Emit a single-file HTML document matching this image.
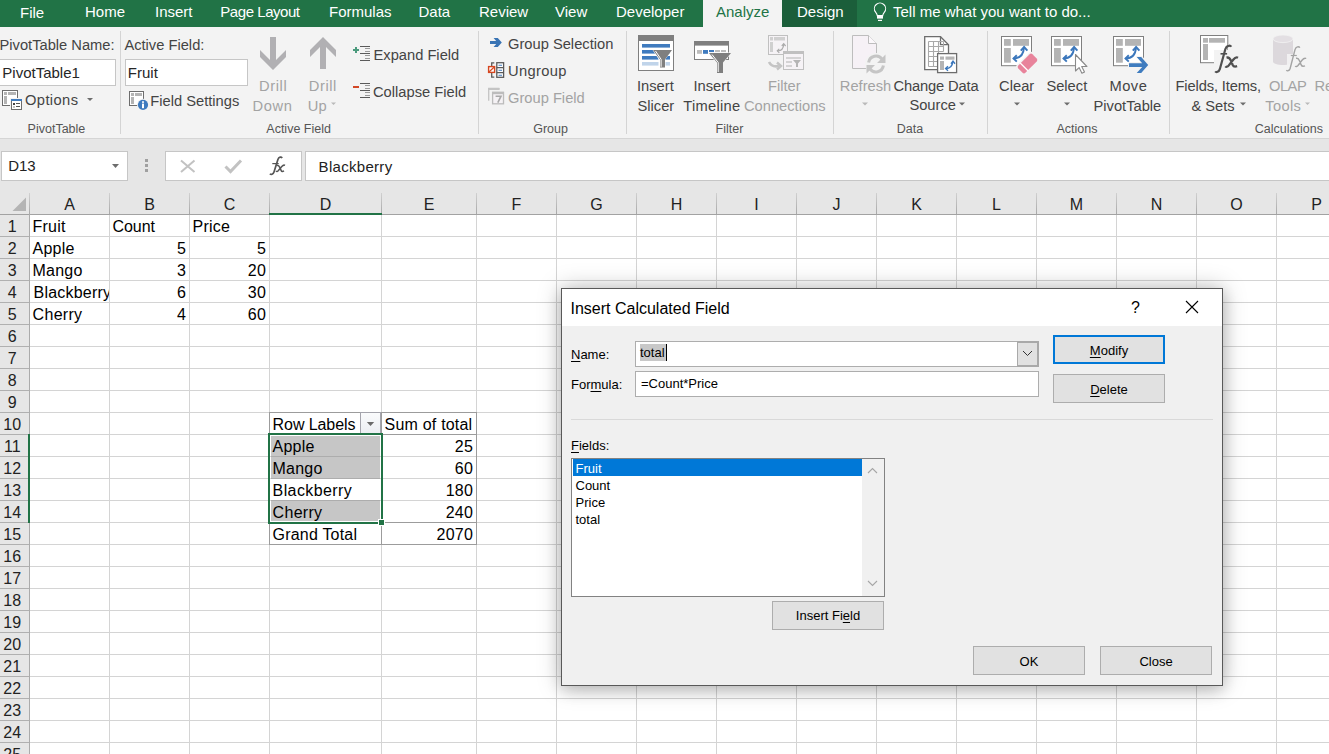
<!DOCTYPE html><html><head><meta charset='utf-8'><style>
*{margin:0;padding:0;box-sizing:border-box}
html,body{width:1329px;height:754px;overflow:hidden;background:#fff;font-family:"Liberation Sans", sans-serif;position:relative}
.a{position:absolute;white-space:pre}
.tab{position:absolute;top:0;height:27px;line-height:25px;font-size:15px;color:#fff;white-space:pre}
.rb{position:absolute;font-size:14.7px;color:#444;white-space:pre;line-height:18px}
.dis{color:#a3a3a3}
.gl{position:absolute;font-size:12.5px;color:#555;white-space:pre;line-height:14px;top:122px}
.sep{position:absolute;top:31px;height:103px;width:1px;background:#d4d4d4}
.c{position:absolute;font-size:16px;letter-spacing:0.2px;line-height:22px;height:22px;color:#000;white-space:pre}
.r{text-align:right}
.dt{position:absolute;font-size:13px;color:#000;white-space:pre;line-height:16px}
.btn{position:absolute;background:#e1e1e1;border:1px solid #adadad;font-size:13px;text-align:center;color:#000;white-space:pre}
.u{text-decoration:underline;text-underline-offset:2px}
svg{position:absolute;overflow:visible}
</style></head><body><div class='a' style='left:0;top:0;width:1329px;height:27px;background:#217346'></div><div class='a' style='left:703px;top:0;width:79px;height:27px;background:#f3f3f3'></div><div class='a' style='left:782px;top:0;width:75px;height:27px;background:#1b5e3a'></div><div class='tab' style='left:20px'>File</div><div class='tab' style='left:85px;top:-1px'>Home</div><div class='tab' style='left:155px;top:-1px'>Insert</div><div class='tab' style='left:220.3px;letter-spacing:-0.45px;top:-1px'>Page Layout</div><div class='tab' style='left:329px;top:-1px'>Formulas</div><div class='tab' style='left:418.5px;top:-1px'>Data</div><div class='tab' style='left:479px;top:-1px'>Review</div><div class='tab' style='left:555px;top:-1px'>View</div><div class='tab' style='left:616px;top:-1px'>Developer</div><div class='tab' style='left:797px;top:-1px'>Design</div><div class='tab' style='left:716px;top:-1px;color:#217346'>Analyze</div><div class='tab' style='left:893px;top:-1px'>Tell me what you want to do...</div><div class='a' style='left:0;top:27px;width:1329px;height:111px;background:#f3f3f3'></div><div class='a' style='left:0;top:138px;width:1329px;height:1px;background:#d5d5d5'></div><div class='a' style='left:0;top:139px;width:1329px;height:76px;background:#e6e6e6'></div><div class='sep' style='left:120px'></div><div class='sep' style='left:478px'></div><div class='sep' style='left:626px'></div><div class='sep' style='left:833px'></div><div class='sep' style='left:987px'></div><div class='sep' style='left:1169px'></div><div class='rb' style='left:-0.5px;top:35.7px'>PivotTable Name:</div><div class='rb' style='left:124.4px;top:35.7px'>Active Field:</div><div class='a' style='left:0;top:59px;width:116px;height:27px;background:#fff;border:1px solid #c6c6c6;border-left:none'></div><div class='a' style='left:125px;top:59px;width:123px;height:27px;background:#fff;border:1px solid #c6c6c6'></div><div class='rb' style='left:2.3px;top:63.8px;font-size:15px;color:#262626'>PivotTable1</div><div class='rb' style='left:127.8px;top:63.8px;font-size:15px;color:#262626'>Fruit</div><div class='rb' style='left:25px;top:91.4px;letter-spacing:0.4px'>Options</div><div class='rb' style='left:150.3px;top:91.5px'>Field Settings</div><div class='rb dis' style='left:259px;top:76.8px;letter-spacing:0.6px'>Drill</div><div class='rb dis' style='left:252.5px;top:96.7px;letter-spacing:0.6px'>Down</div><div class='rb dis' style='left:308.7px;top:76.8px;letter-spacing:0.6px'>Drill</div><div class='rb dis' style='left:307.8px;top:96.7px'>Up</div><div class='rb' style='left:373.5px;top:45.9px'>Expand Field</div><div class='rb' style='left:373px;top:83px'>Collapse Field</div><div class='rb' style='left:508px;top:35px'>Group Selection</div><div class='rb' style='left:508px;top:62.3px;letter-spacing:0.35px'>Ungroup</div><div class='rb dis' style='left:508px;top:88.9px'>Group Field</div><div class='rb' style='left:637px;top:76.7px'>Insert</div><div class='rb' style='left:637.5px;top:96.8px'>Slicer</div><div class='rb' style='left:693.5px;top:76.7px'>Insert</div><div class='rb' style='left:683.3px;top:96.8px;letter-spacing:0.28px'>Timeline</div><div class='rb dis' style='left:768px;top:76.7px'>Filter</div><div class='rb dis' style='left:744px;top:96.8px'>Connections</div><div class='rb dis' style='left:839.8px;top:76.6px'>Refresh</div><div class='rb' style='left:893.5px;top:76.6px;letter-spacing:-0.15px'>Change Data</div><div class='rb' style='left:909.4px;top:96.2px'>Source</div><div class='rb' style='left:999.1px;top:76.6px'>Clear</div><div class='rb' style='left:1046.4px;top:76.6px'>Select</div><div class='rb' style='left:1109.4px;top:76.6px;letter-spacing:0.5px'>Move</div><div class='rb' style='left:1093.5px;top:96.9px'>PivotTable</div><div class='rb' style='left:1175.5px;top:76.6px;letter-spacing:-0.13px'>Fields, Items,</div><div class='rb' style='left:1191.4px;top:96.9px'>&amp; Sets</div><div class='rb dis' style='left:1269px;top:76.6px;letter-spacing:-0.5px'>OLAP</div><div class='rb dis' style='left:1265.3px;top:96.9px;letter-spacing:0.3px'>Tools</div><div class='rb dis' style='left:1314.5px;top:76.6px'>Re</div><div class='gl' style='left:27.6px'>PivotTable</div><div class='gl' style='left:266.3px'>Active Field</div><div class='gl' style='left:533.2px'>Group</div><div class='gl' style='left:715.6px'>Filter</div><div class='gl' style='left:896.7px'>Data</div><div class='gl' style='left:1056.4px'>Actions</div><div class='gl' style='left:1254.8px'>Calculations</div><svg style='left:0;top:0' width='1329' height='140' viewBox='0 0 1329 140'>
<!-- tab lightbulb -->
<path d='M877.3 15.6c-.2-1.6-.9-2.5-1.7-3.5a5.6 5.6 0 1 1 8.8 0c-.8 1-1.5 1.9-1.7 3.5z' fill='none' stroke='#fff' stroke-width='1.1'/>
<rect x='877' y='15.8' width='6' height='2.8' fill='#fff'/><rect x='878' y='19.8' width='4' height='1.2' fill='#fff'/>
<!-- small dropdown arrows -->
<g fill='#6d6d6d'>
<path d='M87 98h6l-3 3z'/><path d='M1014 102.5h6l-3 3z'/><path d='M1064 102.5h6l-3 3z'/>
<path d='M959 102.5h6l-3 3z'/><path d='M1240 102.5h6l-3 3z'/>
</g>
<g fill='#b9b9b9'><path d='M331 102.5h5l-2.5 2.5z'/><path d='M862 102.5h6l-3 3z'/><path d='M1305 102.5h5l-2.5 2.5z'/></g>
<!-- Options icon -->
<rect x='2.5' y='90.5' width='15' height='15' fill='#fff' stroke='#6d6d6d'/>
<rect x='4' y='92' width='3' height='3' fill='#b4b4b4'/><rect x='8' y='92' width='8' height='3' fill='#b4b4b4'/><rect x='4' y='96' width='3' height='8' fill='#b4b4b4'/>
<rect x='10' y='98' width='13' height='13' fill='#f3f3f3'/>
<rect x='11.5' y='99.5' width='10' height='10' fill='#fff' stroke='#6d6d6d'/><rect x='11' y='99' width='11' height='2' fill='#3f7bbf'/>
<rect x='13' y='103' width='2' height='2' fill='#444'/><rect x='16' y='103' width='4' height='1' fill='#555'/><rect x='13' y='106' width='2' height='2' fill='#c4c4c4'/><rect x='16' y='106' width='4' height='1' fill='#555'/>
<!-- Field settings icon -->
<rect x='129.5' y='91.5' width='14' height='14' fill='#fff' stroke='#6d6d6d'/>
<rect x='131' y='93' width='3' height='3' fill='#b4b4b4'/><rect x='135' y='93' width='7' height='3' fill='#b4b4b4'/><rect x='131' y='97' width='3' height='7' fill='#b4b4b4'/>
<circle cx='143' cy='104.8' r='6' fill='#f3f3f3'/><circle cx='143' cy='104.8' r='5.1' fill='#3f7bbf'/>
<rect x='142' y='101.3' width='2' height='1.5' fill='#fff'/><rect x='142' y='103.6' width='2' height='4.6' fill='#fff'/>
<!-- Drill arrows -->
<path d='M270 37h6v23l10-10v7l-13 13-13-13v-7l10 10z' fill='#b1b0b3'/>
<path d='M323 37l13 13v7l-10-10v22h-6v-22l-10 10v-7z' fill='#b1b0b3'/>
<!-- Expand / collapse -->
<path d='M353 50h6M356 47v6' stroke='#4a9a7c' stroke-width='2'/>
<path d='M353 87h6' stroke='#d24726' stroke-width='2'/>
<g stroke='#5a5a5a' stroke-width='1'>
<path d='M360 46.5h10M360 53.5h10M360 60.5h10'/>
<path d='M360 83.5h10M360 90.5h10M360 97.5h10'/>
</g>
<g stroke='#9a9a9a' stroke-width='1'>
<path d='M365 48.5h5M365 51.5h5M365 55.5h5M365 58.5h5'/>
<path d='M365 85.5h5M365 88.5h5M365 92.5h5M365 95.5h5'/>
</g>
<!-- Group selection arrow -->
<path d='M490 41h6.2l-2.6-3.1h4.2l4 4.6-4 4.6h-4.2l2.6-3.1h-6.2z' fill='#3a74b4'/>
<!-- Ungroup -->
<path d='M494.3 62.8h-2.6v14.4h2.6' fill='none' stroke='#5a5a5a' stroke-width='1.3'/>
<rect x='488.6' y='66.6' width='6' height='5.8' fill='#fff' stroke='#d5461f' stroke-width='1.4'/>
<path d='M489.2 71.8l4.8-4.6' stroke='#d5461f' stroke-width='1.2'/>
<rect x='496.8' y='62.7' width='6.8' height='14.6' fill='#fff' stroke='#5a5a5a' stroke-width='1.3'/>
<path d='M496.8 67.7h6.8M496.8 72.6h6.8' stroke='#5a5a5a' stroke-width='1.2'/>
<path d='M498.5 65.3h3.5M498.5 70.3h3.5M498.5 75.2h3.5' stroke='#3f7bbf' stroke-width='1.1'/>
<!-- Group field (disabled) -->
<path d='M488.7 100.7v-12.2h10.6' fill='none' stroke='#c4c4c4' stroke-width='1.3'/>
<path d='M488.2 89h11.4' stroke='#c4c4c4' stroke-width='2'/>
<rect x='492.6' y='92.4' width='10.9' height='11.4' fill='#f5f2f5' stroke='#bcbcbc' stroke-width='1.3'/>
<rect x='492' y='91.8' width='12' height='2.4' fill='#bcbcbc'/>
<path d='M495.6 96.2h5.4l-3.2 6.4' fill='none' stroke='#a8a8a8' stroke-width='1.6'/>
<!-- Insert slicer -->
<rect x='638.5' y='35.5' width='35' height='35' fill='#fff' stroke='#7f7f7f'/>
<rect x='638' y='35' width='36' height='6' fill='#7f7f7f'/>
<rect x='642' y='44' width='28' height='3.6' fill='#3f7bbf'/>
<rect x='642' y='50' width='28' height='3.6' fill='#3f7bbf'/>
<rect x='642' y='56' width='28' height='3.6' fill='#3f7bbf'/>
<rect x='642' y='62' width='28' height='3.6' fill='#c0d4ea'/>
<path d='M652 49h21l-7.5 10v9h-7v-9z' fill='#fff'/>
<path d='M653 50h19l-7 9.5v8h-5v-8z' fill='#7f7f7f'/>
<path d='M655.5 51l5.6 8.3v7.5' fill='none' stroke='#fff' stroke-width='1'/>
<!-- Insert timeline -->
<rect x='694.5' y='41.5' width='34' height='18' fill='#fff' stroke='#7f7f7f'/>
<rect x='694' y='41' width='35' height='4.6' fill='#7f7f7f'/>
<rect x='697' y='50' width='5' height='3.8' fill='#bdbdbd'/><rect x='703' y='50' width='5' height='3.8' fill='#3f7bbf'/>
<rect x='709' y='50' width='5' height='2' fill='#3f7bbf'/><rect x='715' y='50' width='5' height='2' fill='#bdbdbd'/><rect x='721' y='50' width='5' height='2' fill='#bdbdbd'/>
<path d='M708 52.5h24l-8.5 10v11h-7.5v-11z' fill='#f3f3f3'/>
<path d='M709 53h22l-8 9.5v10.5h-6v-10.5z' fill='#7f7f7f'/>
<path d='M712 54.5l6.2 8v9.5' fill='none' stroke='#fff' stroke-width='1'/>
<!-- Filter connections (disabled) -->
<rect x='768.5' y='35.5' width='19' height='19' fill='#f6f3f6' stroke='#c0c0c0'/>
<rect x='770' y='37' width='3' height='3.5' fill='#d0d0d0'/><rect x='774' y='37' width='11' height='3.5' fill='#d0d0d0'/><rect x='770' y='42' width='3' height='10' fill='#d0d0d0'/>
<path d='M777.5 50.8c3.5 0 6-1.8 6.2-6.6' fill='none' stroke='#ababab' stroke-width='1.2'/><path d='M781.8 46l1.9-2.3 1.9 2.3M779.3 48.8l-2 2 2 2' fill='none' stroke='#ababab' stroke-width='1.2'/>
<rect x='783.5' y='51.5' width='20' height='18' fill='#f6f3f6' stroke='#c0c0c0'/>
<rect x='783' y='51' width='21' height='3' fill='#c0c0c0'/>
<path d='M786 58h15M786 62h6M786 66h6' stroke='#c9c9c9' stroke-width='1.5'/>
<path d='M793 60h8l-3 3.5v3.5h-2v-3.5z' fill='#b5b5b5'/>
<path d='M769 62c2 4 6 5 10 4' fill='none' stroke='#c4c4c4' stroke-width='2.6'/>
<path d='M777 62.5l4 3.5-4 3.5' fill='none' stroke='#c4c4c4' stroke-width='2.4'/>
<!-- Refresh (disabled) -->
<path d='M852.5 35.5h16l8 8v25h-24z' fill='#f6f1f6' stroke='#bdbdbd'/>
<path d='M868.5 35.5v8h8' fill='#fbf8fb' stroke='#bdbdbd'/>
<circle cx='876' cy='64' r='11' fill='#f3f3f3'/>
<path d='M868.6 62.5a7.5 7.5 0 0 1 13.6-3.2M883.4 65.5a7.5 7.5 0 0 1-13.6 3.2' fill='none' stroke='#c5c5c5' stroke-width='3'/>
<path d='M885.5 54.5v8.5h-8.5z M866.5 73.5v-8.5h8.5z' fill='#c5c5c5'/>
<!-- Change data source -->
<path d='M924.7 36.7h15.8l8 8v25h-23.8z' fill='#fff' stroke='#6d6d6d' stroke-width='1.3'/>
<path d='M940.5 36.7v8h8' fill='none' stroke='#6d6d6d' stroke-width='1.3'/>
<g stroke='#a9a9a9' fill='none' stroke-width='1.1'><path d='M928.5 41.5h15M928.5 46.5h15M928.5 51.5h15M928.5 56.5h9M928.5 61.5h9M928.5 66.5h9M928.5 41.5v25M933.5 41.5v25M938.5 41.5v12M943.5 41.5v10'/></g>
<rect x='937.6' y='53.6' width='19' height='19' fill='#fff' stroke='#6d6d6d' stroke-width='1.3'/>
<rect x='940' y='56.5' width='4' height='3.2' fill='#b4b4b4'/><rect x='945.5' y='56.5' width='9' height='3.2' fill='#b4b4b4'/><rect x='940' y='61' width='4' height='9' fill='#b4b4b4'/>
<path d='M945.8 68.5c4 0 6.6-2.4 7-6.8' fill='none' stroke='#3b77bc' stroke-width='1.4'/>
<path d='M951 63.8l2-2.6 2 2.6M948 66.3l-2.4 2.2 2.4 2.2' fill='none' stroke='#3b77bc' stroke-width='1.4'/>
<rect x='1001.5' y='36.5' width='30' height='29.2' fill='#fff' stroke='#7f7f7f'/>
<rect x='1004' y='39' width='6.8' height='6.8' fill='#b4b4b4'/><rect x='1013' y='39' width='16' height='6.8' fill='#b4b4b4'/><rect x='1004' y='48' width='6.8' height='14.7' fill='#b4b4b4'/>
<path d='M1013.5 58.4c6 0 10-2.5 10.5-11' fill='none' stroke='#3b77bc' stroke-width='1.9'/>
<path d='M1020.8 50.6l3.3-3.6 3.3 3.6M1016.8 55.2l-3.3 3.2 3.3 3.2' fill='none' stroke='#3b77bc' stroke-width='1.9'/>
<g transform='rotate(-45 1027.5 63.5)'><rect x='1016' y='57' width='23' height='13' rx='3' fill='#f3f3f3'/><rect x='1017.5' y='58.5' width='20' height='10' rx='2' fill='#e8839b'/><rect x='1022' y='58' width='1.3' height='11' fill='#fff'/></g>
<rect x='1051.5' y='36.5' width='30' height='29.2' fill='#fff' stroke='#7f7f7f'/>
<rect x='1054' y='39' width='6.8' height='6.8' fill='#b4b4b4'/><rect x='1063' y='39' width='16' height='6.8' fill='#b4b4b4'/><rect x='1054' y='48' width='6.8' height='14.7' fill='#b4b4b4'/>
<path d='M1063.5 58.4c6 0 10-2.5 10.5-11' fill='none' stroke='#3b77bc' stroke-width='1.9'/>
<path d='M1070.8 50.6l3.3-3.6 3.3 3.6M1066.8 55.2l-3.3 3.2 3.3 3.2' fill='none' stroke='#3b77bc' stroke-width='1.9'/>
<path d='M1075.5 54.5v16.5l3.6-3.4 2.8 5.6 2.6-1.3-2.8-5.4h5.2z' fill='#fff' stroke='#8a8a8a' stroke-width='1.1' stroke-linejoin='round'/>
<rect x='1113.5' y='36.5' width='30' height='29.2' fill='#fff' stroke='#7f7f7f'/>
<rect x='1116' y='39' width='6.8' height='6.8' fill='#b4b4b4'/><rect x='1125' y='39' width='16' height='6.8' fill='#b4b4b4'/><rect x='1116' y='48' width='6.8' height='14.7' fill='#b4b4b4'/>
<path d='M1125.5 58.4c6 0 10-2.5 10.5-11' fill='none' stroke='#3b77bc' stroke-width='1.9'/>
<path d='M1132.8 50.6l3.3-3.6 3.3 3.6M1128.8 55.2l-3.3 3.2 3.3 3.2' fill='none' stroke='#3b77bc' stroke-width='1.9'/>
<path d='M1128 62h13l-5.5-6h6.5l8 9-8 9h-6.5l5.5-6h-13z' fill='#f3f3f3'/><path d='M1129 63.2h13.2l-5.5-6.1h4.5l7 7.9-7 7.9h-4.5l5.5-6h-13.2z' fill='#3f7cbf'/>
<!-- Fields items sets -->
<rect x='1200.5' y='35.5' width='27.3' height='27.2' fill='#fff' stroke='#7f7f7f'/>
<rect x='1203' y='38' width='5' height='4.7' fill='#b4b4b4'/><rect x='1209' y='38' width='16' height='4.7' fill='#b4b4b4'/><rect x='1203' y='44' width='5' height='16' fill='#b4b4b4'/>
<rect x='1214' y='50' width='26' height='24' fill='#f3f3f3'/>
<rect x='1228' y='44' width='5' height='8' fill='#f3f3f3'/>
<path d='M1231.2 46.8c-.8-1.6-4.6-1.8-5.8 2.2l-5.6 20.2c-.9 2.9-3.6 3.4-4.6 2.2' fill='none' stroke='#505050' stroke-width='2.2'/>
<path d='M1220.5 53.8h6.6' stroke='#505050' stroke-width='1.6'/>
<path d='M1226.5 57.6c2.4-.6 3.4.6 4.4 3l1.8 4.4c.7 1.6 2 2 4.4 1.2M1238 57.8c-1.6-.9-3.2 0-4.8 2l-4.6 5.8c-1 1.3-2.6 1.5-3.2.7' fill='none' stroke='#505050' stroke-width='2.3'/>
<!-- OLAP -->
<path d='M1273 39v22.5c0 2.2 4.5 3.5 10 3.5s10-1.3 10-3.5v-22.5z' fill='#dcd8dc'/>
<ellipse cx='1283' cy='38.8' rx='10' ry='3.8' fill='#e3dfe3' stroke='#f3f3f3' stroke-width='0.8'/>
<rect x='1287' y='54' width='21' height='20' fill='#f3f3f3' opacity='0.9'/>
<path d='M1299.8 47.8c-.7-1.4-3.8-1.6-4.8 1.8l-4.8 18.6c-.8 2.8-3 3.2-3.8 2' fill='none' stroke='#a3a3a3' stroke-width='1.4'/>
<path d='M1290.8 55.5h6' stroke='#a3a3a3' stroke-width='1.2'/>
<path d='M1296 58.3c2-.5 2.8.5 3.6 2.6l1.6 4c.6 1.4 1.8 1.8 3.8 1M1306.2 58.5c-1.4-.8-2.8 0-4.2 1.8l-4 5.2c-.9 1.1-2.2 1.3-2.8.6' fill='none' stroke='#a3a3a3' stroke-width='1.4'/>
</svg>
<div class='a' style='left:1px;top:151px;width:127px;height:30px;background:#fff;border:1px solid #c6c6c6'></div><div class='a' style='left:8.2px;top:157px;font-size:15px;line-height:18px;color:#222'>D13</div><div class='a' style='left:165px;top:151px;width:137px;height:30px;background:#fff;border:1px solid #c6c6c6'></div><div class='a' style='left:305px;top:151px;width:1030px;height:30px;background:#fff;border:1px solid #c6c6c6'></div><div class='a' style='left:318.6px;top:158px;font-size:15px;letter-spacing:0.3px;line-height:18px;color:#222'>Blackberry</div><svg style='left:0;top:0' width='1329' height='200'>
<path d='M112 164h7l-3.5 4z' fill='#6d6d6d'/>
<rect x='145' y='159' width='3' height='3' fill='#a0a0a0'/><rect x='145' y='164' width='3' height='3' fill='#a0a0a0'/><rect x='145' y='169' width='3' height='3' fill='#a0a0a0'/>
<path d='M181 160.5l13.5 11.5M194.5 160.5l-13.5 11.5' stroke='#c2c2c2' stroke-width='2'/>
<path d='M225.5 166.5l5 5 10.5-11' fill='none' stroke='#c2c2c2' stroke-width='3'/>
<path d='M282.2 158c-.8-1.2-3.4-1.5-4.3 1.5l-3.9 12.6c-.8 2.5-3 2.8-4.1 1.6' fill='none' stroke='#555' stroke-width='1.7'/>
<path d='M272.3 163.6h6.4' stroke='#555' stroke-width='1.2'/>
<path d='M276.6 165.4c1.9-.4 2.5.4 3.3 2.2l1.3 3c.5 1.1 1.4 1.2 2.8.3M285 165.4c-1-.6-2.2 0-3.2 1.2l-3.4 4c-.8 1-1.8 1-2.4.3' fill='none' stroke='#555' stroke-width='1.5'/>
</svg><div class='a' style='left:30px;top:215px;width:1299px;height:539px;background:#fff'></div><div class='a' style='left:0;top:215px;width:29px;height:539px;background:#e6e6e6'></div><div class='a' style='left:30px;top:236px;width:1299px;height:1px;background:#d4d4d4'></div><div class='a' style='left:0;top:236px;width:29px;height:1px;background:#b0b0b0'></div><div class='a' style='left:30px;top:258px;width:1299px;height:1px;background:#d4d4d4'></div><div class='a' style='left:0;top:258px;width:29px;height:1px;background:#b0b0b0'></div><div class='a' style='left:30px;top:280px;width:1299px;height:1px;background:#d4d4d4'></div><div class='a' style='left:0;top:280px;width:29px;height:1px;background:#b0b0b0'></div><div class='a' style='left:30px;top:302px;width:1299px;height:1px;background:#d4d4d4'></div><div class='a' style='left:0;top:302px;width:29px;height:1px;background:#b0b0b0'></div><div class='a' style='left:30px;top:324px;width:1299px;height:1px;background:#d4d4d4'></div><div class='a' style='left:0;top:324px;width:29px;height:1px;background:#b0b0b0'></div><div class='a' style='left:30px;top:346px;width:1299px;height:1px;background:#d4d4d4'></div><div class='a' style='left:0;top:346px;width:29px;height:1px;background:#b0b0b0'></div><div class='a' style='left:30px;top:368px;width:1299px;height:1px;background:#d4d4d4'></div><div class='a' style='left:0;top:368px;width:29px;height:1px;background:#b0b0b0'></div><div class='a' style='left:30px;top:390px;width:1299px;height:1px;background:#d4d4d4'></div><div class='a' style='left:0;top:390px;width:29px;height:1px;background:#b0b0b0'></div><div class='a' style='left:30px;top:412px;width:1299px;height:1px;background:#d4d4d4'></div><div class='a' style='left:0;top:412px;width:29px;height:1px;background:#b0b0b0'></div><div class='a' style='left:30px;top:434px;width:1299px;height:1px;background:#d4d4d4'></div><div class='a' style='left:0;top:434px;width:29px;height:1px;background:#b0b0b0'></div><div class='a' style='left:30px;top:456px;width:1299px;height:1px;background:#d4d4d4'></div><div class='a' style='left:0;top:456px;width:29px;height:1px;background:#b0b0b0'></div><div class='a' style='left:30px;top:478px;width:1299px;height:1px;background:#d4d4d4'></div><div class='a' style='left:0;top:478px;width:29px;height:1px;background:#b0b0b0'></div><div class='a' style='left:30px;top:500px;width:1299px;height:1px;background:#d4d4d4'></div><div class='a' style='left:0;top:500px;width:29px;height:1px;background:#b0b0b0'></div><div class='a' style='left:30px;top:522px;width:1299px;height:1px;background:#d4d4d4'></div><div class='a' style='left:0;top:522px;width:29px;height:1px;background:#b0b0b0'></div><div class='a' style='left:30px;top:544px;width:1299px;height:1px;background:#d4d4d4'></div><div class='a' style='left:0;top:544px;width:29px;height:1px;background:#b0b0b0'></div><div class='a' style='left:30px;top:566px;width:1299px;height:1px;background:#d4d4d4'></div><div class='a' style='left:0;top:566px;width:29px;height:1px;background:#b0b0b0'></div><div class='a' style='left:30px;top:588px;width:1299px;height:1px;background:#d4d4d4'></div><div class='a' style='left:0;top:588px;width:29px;height:1px;background:#b0b0b0'></div><div class='a' style='left:30px;top:610px;width:1299px;height:1px;background:#d4d4d4'></div><div class='a' style='left:0;top:610px;width:29px;height:1px;background:#b0b0b0'></div><div class='a' style='left:30px;top:632px;width:1299px;height:1px;background:#d4d4d4'></div><div class='a' style='left:0;top:632px;width:29px;height:1px;background:#b0b0b0'></div><div class='a' style='left:30px;top:654px;width:1299px;height:1px;background:#d4d4d4'></div><div class='a' style='left:0;top:654px;width:29px;height:1px;background:#b0b0b0'></div><div class='a' style='left:30px;top:676px;width:1299px;height:1px;background:#d4d4d4'></div><div class='a' style='left:0;top:676px;width:29px;height:1px;background:#b0b0b0'></div><div class='a' style='left:30px;top:698px;width:1299px;height:1px;background:#d4d4d4'></div><div class='a' style='left:0;top:698px;width:29px;height:1px;background:#b0b0b0'></div><div class='a' style='left:30px;top:720px;width:1299px;height:1px;background:#d4d4d4'></div><div class='a' style='left:0;top:720px;width:29px;height:1px;background:#b0b0b0'></div><div class='a' style='left:30px;top:742px;width:1299px;height:1px;background:#d4d4d4'></div><div class='a' style='left:0;top:742px;width:29px;height:1px;background:#b0b0b0'></div><div class='a' style='left:30px;top:764px;width:1299px;height:1px;background:#d4d4d4'></div><div class='a' style='left:0;top:764px;width:29px;height:1px;background:#b0b0b0'></div><div class='a' style='left:109px;top:215px;width:1px;height:539px;background:#d4d4d4'></div><div class='a' style='left:189px;top:215px;width:1px;height:539px;background:#d4d4d4'></div><div class='a' style='left:269px;top:215px;width:1px;height:539px;background:#d4d4d4'></div><div class='a' style='left:381px;top:215px;width:1px;height:539px;background:#d4d4d4'></div><div class='a' style='left:476px;top:215px;width:1px;height:539px;background:#d4d4d4'></div><div class='a' style='left:556px;top:215px;width:1px;height:539px;background:#d4d4d4'></div><div class='a' style='left:636px;top:215px;width:1px;height:539px;background:#d4d4d4'></div><div class='a' style='left:716px;top:215px;width:1px;height:539px;background:#d4d4d4'></div><div class='a' style='left:796px;top:215px;width:1px;height:539px;background:#d4d4d4'></div><div class='a' style='left:876px;top:215px;width:1px;height:539px;background:#d4d4d4'></div><div class='a' style='left:956px;top:215px;width:1px;height:539px;background:#d4d4d4'></div><div class='a' style='left:1036px;top:215px;width:1px;height:539px;background:#d4d4d4'></div><div class='a' style='left:1116px;top:215px;width:1px;height:539px;background:#d4d4d4'></div><div class='a' style='left:1196px;top:215px;width:1px;height:539px;background:#d4d4d4'></div><div class='a' style='left:1276px;top:215px;width:1px;height:539px;background:#d4d4d4'></div><div class='a' style='left:1356px;top:215px;width:1px;height:539px;background:#d4d4d4'></div><div class='a' style='left:29px;top:193px;width:1px;height:21px;background:linear-gradient(#d0d0d0,#a8a8a8)'></div><div class='a' style='left:109px;top:193px;width:1px;height:21px;background:linear-gradient(#d0d0d0,#a8a8a8)'></div><div class='a' style='left:189px;top:193px;width:1px;height:21px;background:linear-gradient(#d0d0d0,#a8a8a8)'></div><div class='a' style='left:269px;top:193px;width:1px;height:21px;background:linear-gradient(#d0d0d0,#a8a8a8)'></div><div class='a' style='left:381px;top:193px;width:1px;height:21px;background:linear-gradient(#d0d0d0,#a8a8a8)'></div><div class='a' style='left:476px;top:193px;width:1px;height:21px;background:linear-gradient(#d0d0d0,#a8a8a8)'></div><div class='a' style='left:556px;top:193px;width:1px;height:21px;background:linear-gradient(#d0d0d0,#a8a8a8)'></div><div class='a' style='left:636px;top:193px;width:1px;height:21px;background:linear-gradient(#d0d0d0,#a8a8a8)'></div><div class='a' style='left:716px;top:193px;width:1px;height:21px;background:linear-gradient(#d0d0d0,#a8a8a8)'></div><div class='a' style='left:796px;top:193px;width:1px;height:21px;background:linear-gradient(#d0d0d0,#a8a8a8)'></div><div class='a' style='left:876px;top:193px;width:1px;height:21px;background:linear-gradient(#d0d0d0,#a8a8a8)'></div><div class='a' style='left:956px;top:193px;width:1px;height:21px;background:linear-gradient(#d0d0d0,#a8a8a8)'></div><div class='a' style='left:1036px;top:193px;width:1px;height:21px;background:linear-gradient(#d0d0d0,#a8a8a8)'></div><div class='a' style='left:1116px;top:193px;width:1px;height:21px;background:linear-gradient(#d0d0d0,#a8a8a8)'></div><div class='a' style='left:1196px;top:193px;width:1px;height:21px;background:linear-gradient(#d0d0d0,#a8a8a8)'></div><div class='a' style='left:1276px;top:193px;width:1px;height:21px;background:linear-gradient(#d0d0d0,#a8a8a8)'></div><div class='a' style='left:1356px;top:193px;width:1px;height:21px;background:linear-gradient(#d0d0d0,#a8a8a8)'></div><div class='a' style='left:0;top:214px;width:1329px;height:1px;background:#a2a2a2'></div><div class='a' style='left:29px;top:214px;width:1px;height:540px;background:#ababab'></div><svg style='left:0;top:0' width='40' height='220'><path d='M26 197.5v13.5h-13.5z' fill='#b4b4b4'/></svg><div class='c' style='left:29.5px;top:194px;width:80px;text-align:center;letter-spacing:0;color:#222'>A</div><div class='c' style='left:109.5px;top:194px;width:80px;text-align:center;letter-spacing:0;color:#222'>B</div><div class='c' style='left:189.5px;top:194px;width:80px;text-align:center;letter-spacing:0;color:#222'>C</div><div class='c' style='left:285.5px;top:194px;width:80px;text-align:center;letter-spacing:0;color:#222'>D</div><div class='c' style='left:389.0px;top:194px;width:80px;text-align:center;letter-spacing:0;color:#222'>E</div><div class='c' style='left:476.5px;top:194px;width:80px;text-align:center;letter-spacing:0;color:#222'>F</div><div class='c' style='left:556.5px;top:194px;width:80px;text-align:center;letter-spacing:0;color:#222'>G</div><div class='c' style='left:636.5px;top:194px;width:80px;text-align:center;letter-spacing:0;color:#222'>H</div><div class='c' style='left:716.5px;top:194px;width:80px;text-align:center;letter-spacing:0;color:#222'>I</div><div class='c' style='left:796.5px;top:194px;width:80px;text-align:center;letter-spacing:0;color:#222'>J</div><div class='c' style='left:876.5px;top:194px;width:80px;text-align:center;letter-spacing:0;color:#222'>K</div><div class='c' style='left:956.5px;top:194px;width:80px;text-align:center;letter-spacing:0;color:#222'>L</div><div class='c' style='left:1036.5px;top:194px;width:80px;text-align:center;letter-spacing:0;color:#222'>M</div><div class='c' style='left:1116.5px;top:194px;width:80px;text-align:center;letter-spacing:0;color:#222'>N</div><div class='c' style='left:1196.5px;top:194px;width:80px;text-align:center;letter-spacing:0;color:#222'>O</div><div class='c' style='left:1276.5px;top:194px;width:80px;text-align:center;letter-spacing:0;color:#222'>P</div><div class='a' style='left:269px;top:213px;width:113px;height:2px;background:#217346'></div><div class='c' style='left:0;top:216px;width:24.5px;text-align:center;letter-spacing:0;color:#222'>1</div><div class='c' style='left:0;top:238px;width:24.5px;text-align:center;letter-spacing:0;color:#222'>2</div><div class='c' style='left:0;top:260px;width:24.5px;text-align:center;letter-spacing:0;color:#222'>3</div><div class='c' style='left:0;top:282px;width:24.5px;text-align:center;letter-spacing:0;color:#222'>4</div><div class='c' style='left:0;top:304px;width:24.5px;text-align:center;letter-spacing:0;color:#222'>5</div><div class='c' style='left:0;top:326px;width:24.5px;text-align:center;letter-spacing:0;color:#222'>6</div><div class='c' style='left:0;top:348px;width:24.5px;text-align:center;letter-spacing:0;color:#222'>7</div><div class='c' style='left:0;top:370px;width:24.5px;text-align:center;letter-spacing:0;color:#222'>8</div><div class='c' style='left:0;top:392px;width:24.5px;text-align:center;letter-spacing:0;color:#222'>9</div><div class='c' style='left:0;top:414px;width:24.5px;text-align:center;letter-spacing:0;color:#222'>10</div><div class='c' style='left:0;top:436px;width:24.5px;text-align:center;letter-spacing:0;color:#222'>11</div><div class='c' style='left:0;top:458px;width:24.5px;text-align:center;letter-spacing:0;color:#222'>12</div><div class='c' style='left:0;top:480px;width:24.5px;text-align:center;letter-spacing:0;color:#222'>13</div><div class='c' style='left:0;top:502px;width:24.5px;text-align:center;letter-spacing:0;color:#222'>14</div><div class='c' style='left:0;top:524px;width:24.5px;text-align:center;letter-spacing:0;color:#222'>15</div><div class='c' style='left:0;top:546px;width:24.5px;text-align:center;letter-spacing:0;color:#222'>16</div><div class='c' style='left:0;top:568px;width:24.5px;text-align:center;letter-spacing:0;color:#222'>17</div><div class='c' style='left:0;top:590px;width:24.5px;text-align:center;letter-spacing:0;color:#222'>18</div><div class='c' style='left:0;top:612px;width:24.5px;text-align:center;letter-spacing:0;color:#222'>19</div><div class='c' style='left:0;top:634px;width:24.5px;text-align:center;letter-spacing:0;color:#222'>20</div><div class='c' style='left:0;top:656px;width:24.5px;text-align:center;letter-spacing:0;color:#222'>21</div><div class='c' style='left:0;top:678px;width:24.5px;text-align:center;letter-spacing:0;color:#222'>22</div><div class='c' style='left:0;top:700px;width:24.5px;text-align:center;letter-spacing:0;color:#222'>23</div><div class='c' style='left:0;top:722px;width:24.5px;text-align:center;letter-spacing:0;color:#222'>24</div><div class='c' style='left:0;top:744px;width:24.5px;text-align:center;letter-spacing:0;color:#222'>25</div><div class='a' style='left:28px;top:434px;width:2px;height:89px;background:#217346'></div><div class='c' style='left:32.6px;top:216px'>Fruit</div><div class='c' style='left:112.6px;top:216px;letter-spacing:-0.1px'>Count</div><div class='c' style='left:192.6px;top:216px'>Price</div><div class='c' style='left:32.6px;top:238px'>Apple</div><div class='c r' style='left:109px;top:238px;width:77px'>5</div><div class='c r' style='left:189px;top:238px;width:77px'>5</div><div class='c' style='left:32.6px;top:260px'>Mango</div><div class='c r' style='left:109px;top:260px;width:77px'>3</div><div class='c r' style='left:189px;top:260px;width:77px'>20</div><div class='a' style='left:30px;top:281px;width:79px;height:21px;overflow:hidden'><div class='c' style='left:3.6px;top:1px'>Blackberry</div></div><div class='c r' style='left:109px;top:282px;width:77px'>6</div><div class='c r' style='left:189px;top:282px;width:77px'>30</div><div class='c' style='left:32.6px;top:304px;letter-spacing:0.3px'>Cherry</div><div class='c r' style='left:109px;top:304px;width:77px'>4</div><div class='c r' style='left:189px;top:304px;width:77px'>60</div><div class='a' style='left:271px;top:436px;width:109px;height:20px;background:#c6c6c6'></div><div class='a' style='left:271px;top:457px;width:109px;height:21px;background:#c6c6c6'></div><div class='a' style='left:271px;top:501px;width:109px;height:20px;background:#c6c6c6'></div><div class='a' style='left:271px;top:456px;width:109px;height:1px;background:#adadad'></div><div class='a' style='left:271px;top:478px;width:109px;height:1px;background:#adadad'></div><div class='a' style='left:271px;top:500px;width:109px;height:1px;background:#adadad'></div><div class='a' style='left:269px;top:412px;width:208px;height:1px;background:#9c9c9c'></div><div class='a' style='left:269px;top:434px;width:208px;height:1px;background:#9c9c9c'></div><div class='a' style='left:269px;top:522px;width:208px;height:1px;background:#9c9c9c'></div><div class='a' style='left:269px;top:544px;width:208px;height:1px;background:#9c9c9c'></div><div class='a' style='left:269px;top:412px;width:1px;height:133px;background:#9c9c9c'></div><div class='a' style='left:381px;top:412px;width:1px;height:133px;background:#9c9c9c'></div><div class='a' style='left:476px;top:412px;width:1px;height:133px;background:#9c9c9c'></div><div class='a' style='left:360px;top:412px;width:21px;height:22px;background:linear-gradient(#fafbfc,#eceef2);border:1px solid #a4a4ac'></div><svg style='left:0;top:0' width='400' height='440'><path d='M366.8 422h7.4l-3.7 3.9z' fill='#6a6a6a'/></svg><div class='c' style='left:272.6px;top:414px;letter-spacing:-0.08px'>Row Labels</div><div class='c' style='left:384.6px;top:414px'>Sum of total</div><div class='c' style='left:272.6px;top:436px'>Apple</div><div class='c r' style='left:381px;top:436px;width:92px'>25</div><div class='c' style='left:272.6px;top:458px'>Mango</div><div class='c r' style='left:381px;top:458px;width:92px'>60</div><div class='c' style='left:272.6px;top:480px;letter-spacing:0.4px'>Blackberry</div><div class='c r' style='left:381px;top:480px;width:92px'>180</div><div class='c' style='left:272.6px;top:502px;letter-spacing:0.3px'>Cherry</div><div class='c r' style='left:381px;top:502px;width:92px'>240</div><div class='c' style='left:272.6px;top:524px'>Grand Total</div><div class='c r' style='left:381px;top:524px;width:92px'>2070</div><div class='a' style='left:268px;top:433px;width:115px;height:91px;border:2px solid #217346'></div><div class='a' style='left:378px;top:519px;width:7px;height:7px;background:#217346;border:1px solid #fff'></div><div class='a' style='left:561px;top:288px;width:662px;height:398px;background:#f0f0f0;border:1px solid #595959;box-shadow:0 0 22px rgba(0,0,0,0.26),0 5px 14px rgba(0,0,0,0.14)'></div><div class='a' style='left:562px;top:289px;width:660px;height:37px;background:#fff'></div><div class='a' style='left:570.5px;top:299.5px;font-size:16px;line-height:18px;color:#000'>Insert Calculated Field</div><div class='a' style='left:1131px;top:299px;font-size:16px;line-height:18px;color:#000'>?</div><svg style='left:0;top:0' width='1329' height='754'><path d='M1186 301l12 12M1198 301l-12 12' stroke='#000' stroke-width='1.1'/></svg><div class='dt' style='left:571px;top:347px'><span class='u'>N</span>ame:</div><div class='dt' style='left:571px;top:377px'>For<span class='u'>m</span>ula:</div><div class='a' style='left:635px;top:341px;width:404px;height:26px;background:#fff;border:1px solid #adadad'></div><div class='a' style='left:1017px;top:341px;width:22px;height:26px;background:#e1e1e1;border:2px solid #a9a9a9;border-left-width:1px'></div><svg style='left:0;top:0' width='1329' height='754'><path d='M1023 351l4.5 4.5 4.5-4.5' fill='none' stroke='#333' stroke-width='1'/></svg><div class='a' style='left:640px;top:344px;width:26px;height:17px;background:#c8c8c8'></div><div class='dt' style='left:640px;top:345px'>total</div><div class='a' style='left:666px;top:344px;width:1px;height:17px;background:#000'></div><div class='a' style='left:635px;top:371px;width:404px;height:26px;background:#fff;border:1px solid #adadad'></div><div class='dt' style='left:641px;top:376px'>=Count*Price</div><div class='btn' style='left:1053px;top:335px;width:112px;height:29px;border:2px solid #0078d7;line-height:27px'><span class='u'>M</span>odify</div><div class='btn' style='left:1053px;top:374px;width:112px;height:29px;line-height:29px'><span class='u'>D</span>elete</div><div class='a' style='left:571px;top:419px;width:642px;height:1px;background:#d9d9d9'></div><div class='dt' style='left:571px;top:438px'><span class='u'>F</span>ields:</div><div class='a' style='left:571px;top:458px;width:314px;height:139px;background:#fff;border:1px solid #828282'></div><div class='a' style='left:862px;top:459px;width:22px;height:137px;background:#f0f0f0'></div><svg style='left:0;top:0' width='1329' height='754'><path d='M868 473l4.5-4.5 4.5 4.5M868 581l4.5 4.5 4.5-4.5' fill='none' stroke='#a6a6a6' stroke-width='1.1'/></svg><div class='a' style='left:573px;top:459px;width:289px;height:17px;background:#0078d7'></div><div class='dt' style='left:575.5px;top:461px;color:#fff'>Fruit</div><div class='dt' style='left:575.5px;top:478px;color:#000'>Count</div><div class='dt' style='left:575.5px;top:495px;color:#000'>Price</div><div class='dt' style='left:575.5px;top:512px;color:#000'>total</div><div class='btn' style='left:772px;top:601px;width:112px;height:29px;line-height:27px'>Insert Fi<span class='u'>e</span>ld</div><div class='btn' style='left:973px;top:646px;width:112px;height:29px;line-height:29px'>OK</div><div class='btn' style='left:1100px;top:646px;width:112px;height:29px;line-height:29px'>Close</div></body></html>
